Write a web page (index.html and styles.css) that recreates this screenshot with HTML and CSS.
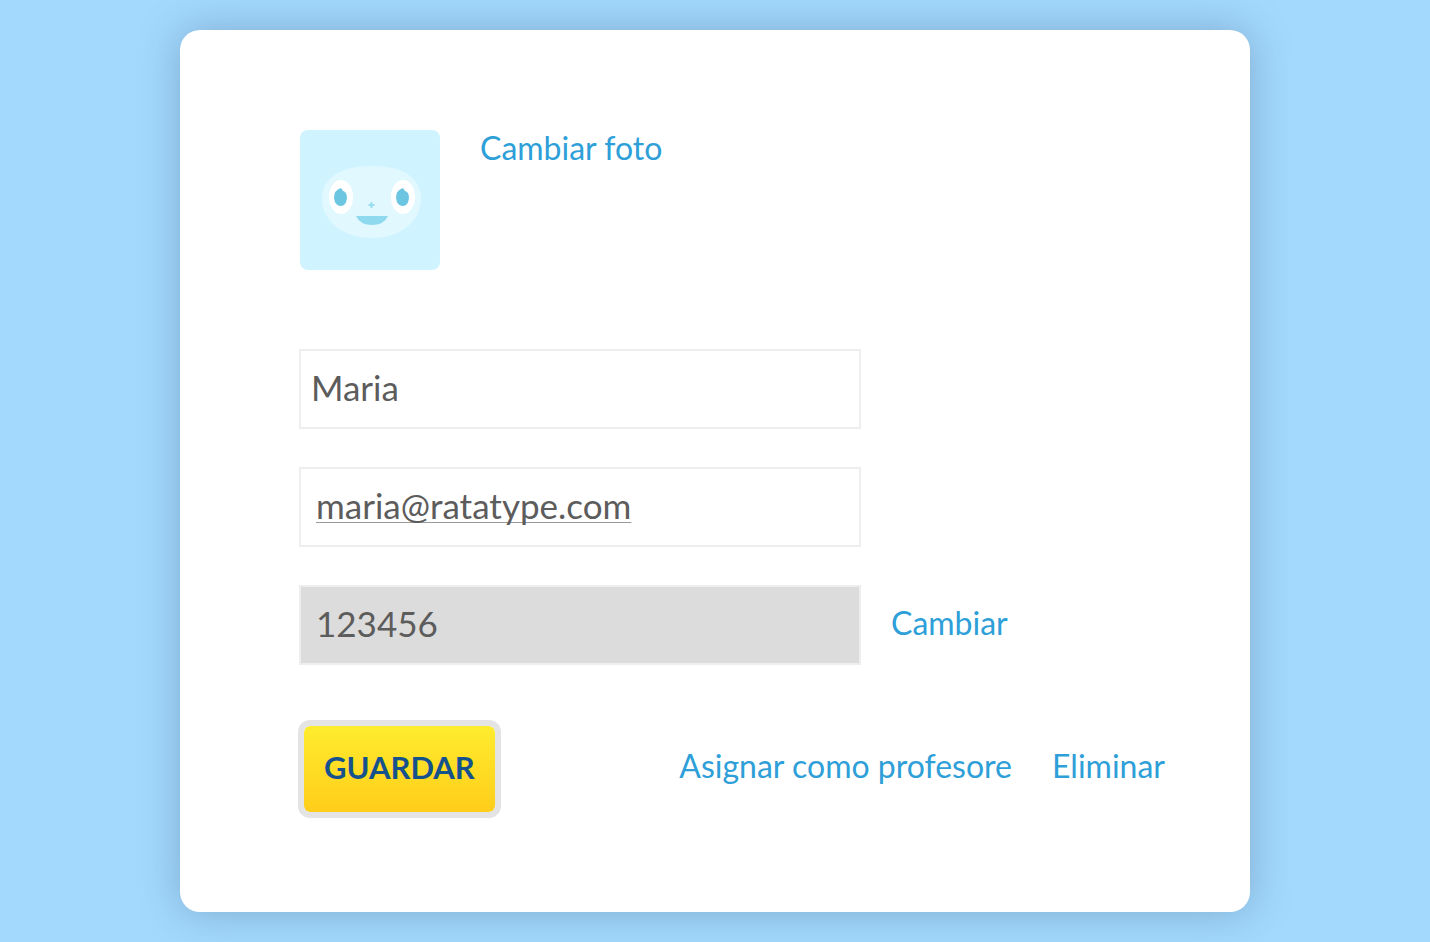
FILE: index.html
```html
<!DOCTYPE html>
<html lang="es">
<head>
  <meta charset="UTF-8">
  <meta name="viewport" content="width=device-width, initial-scale=1.0">
  <title>Perfil</title>
  <link rel="stylesheet" href="styles.css">
</head>
<body>

  <main class="card">
    <div class="photo-row">
      <svg class="avatar" viewBox="0 0 140 140" aria-hidden="true">
        <rect width="140" height="140" fill="#cff4ff"/>
        <path d="M72 36 C102 36 121 47 121 69 C121 91 100 108 72 108 C43 108 22 91 22 69 C22 47 42 36 72 36Z" fill="#e1f8ff"/>
        <ellipse cx="41" cy="67" rx="12" ry="17" fill="#fff"/>
        <ellipse cx="103" cy="67" rx="12" ry="17" fill="#fff"/>
        <path d="M41 58 L43 61 Q47 62 47 68 Q46 76 41 76 Q35 76 34 68 Q34 60 41 58Z" fill="#6cc5e1"/>
        <path d="M103 58 L105 61 Q109 62 109 68 Q108 76 103 76 Q97 76 96 68 Q96 60 103 58Z" fill="#6cc5e1"/>
        <path d="M71.500 72 V78 M68.500 75 H74.500" stroke="#9bdcef" stroke-width="2"/>
        <path d="M56 86 H88 Q84 95 72 95 Q60 95 56 86Z" fill="#8fd9ee"/>
      </svg>
      <a href="#" class="link">Cambiar foto</a>
    </div>

    <form id="profile-form">
      <div class="field">
        <input type="text" id="name" name="name" class="name" value="Maria" aria-label="Nombre">
      </div>

      <div class="field">
        <input type="email" id="email" name="email" class="email" value="maria@ratatype.com" aria-label="Correo" spellcheck="false">
      </div>

      <div class="field">
        <input type="text" id="password" name="password" class="password" value="123456" aria-label="Clave" readonly>
        <a href="#" class="link">Cambiar</a>
      </div>

      <div class="actions">
        <button type="submit" class="save-btn">GUARDAR</button>
        <div class="links">
          <a href="#" class="link">Asignar como profesore</a>
          <a href="#" class="link">Eliminar</a>
        </div>
      </div>
    </form>
  </main>

</body>
</html>
```

FILE: styles.css
```css
* {
  box-sizing: border-box;
}

body {
  font-family: Lato, sans-serif;
  margin: 0;
  padding: 30px;
  background-color: #a3d9fd;
}

.card {
  max-width: 1070px;
  margin: 0 auto;
  padding: 100px 85px 94px 118px;
  background-color: white;
  border-radius: 20px;
  box-shadow: 0 0 40px rgba(80, 115, 150, 0.45);
}

.link {
  color: #2e9fd8;
  font-size: 32px;
  line-height: 36px;
  text-decoration: none;
  white-space: nowrap;
}

.photo-row {
  display: flex;
  align-items: flex-start;
  gap: 40px;
  margin: 0 0 79px 2px;
}

.avatar {
  width: 140px;
  height: 140px;
  border-radius: 8px;
}

.field {
  display: flex;
  align-items: center;
  gap: 30px;
  margin: 0 0 38px 1px;
}

.field input {
  width: 562px;
  height: 80px;
  padding: 0 15px 4px;
  border: 2px solid #eee;
  color: #5c5c5c;
  background-color: white;
  font-family: inherit;
  font-size: 35px;
}

.field .link {
  padding-bottom: 4px;
}

.field .name {
  padding-left: 10px;
}

.field .email {
  text-decoration: underline 1px #999;
  text-decoration-skip-ink: none;
  text-underline-offset: 3px;
}

.field .password {
  background-color: #dcdcdc;
}

.actions {
  display: flex;
  justify-content: space-between;
  align-items: center;
  margin-top: 55px;
}

.save-btn {
  height: 98px;
  padding: 0 20px 4px;
  border: 6px solid #e4e4e4;
  border-radius: 12px;
  color: #15528c;
  background: linear-gradient(#ffec2e, #ffcd1a) padding-box;
  font-family: inherit;
  font-size: 31px;
  font-weight: bold;
  cursor: pointer;
}

.links {
  display: flex;
  gap: 40px;
  padding-bottom: 6px;
}
```
